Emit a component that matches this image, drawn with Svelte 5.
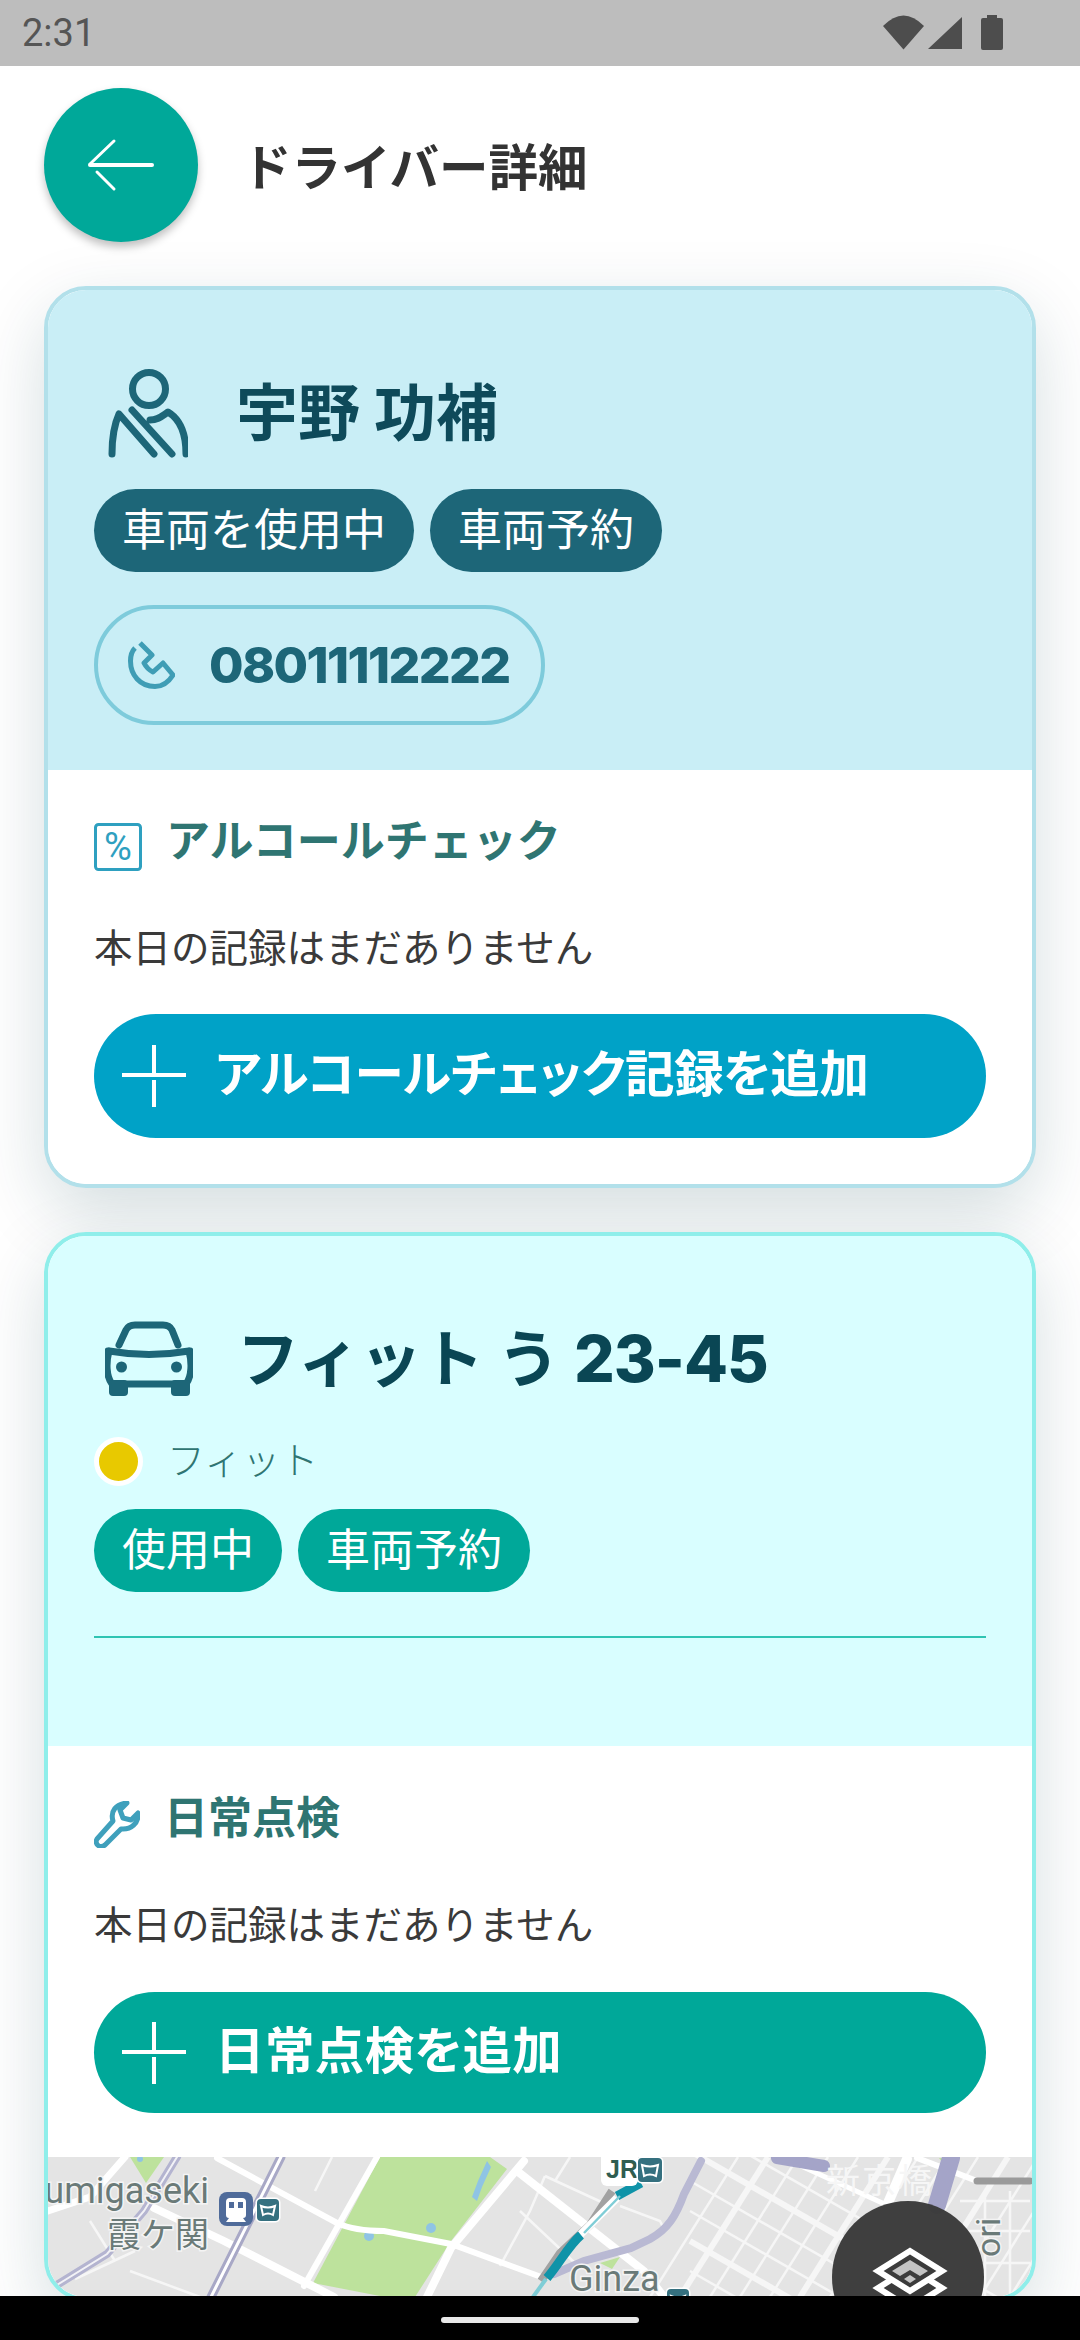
<script>
  // street grid for the right half of the map, page-space coords
  const risers = Array.from({ length: 15 }, (_, i) => ({
    x: 650 + i * 30,
    w: i % 4 === 1 ? 6 : 2.5,
  }))
  const crossers = Array.from({ length: 12 }, (_, i) => ({
    y: 2120 + i * 30,
    w: i % 3 === 1 ? 6 : 2.5,
  }))
</script>

<div class="app">
  <div class="status">
    <span class="time">2:31</span>
    <svg class="status-icons" width="120" height="35" viewBox="883 15 120 35" fill="#4d4d4d">
      <path d="M883 26Q903.5 5 924 26L903.5 49.5Z" />
      <path d="M962 17V49H928Z" />
      <path d="M987 15h10v3h4a2 2 0 0 1 2 2v28a2 2 0 0 1-2 2h-18a2 2 0 0 1-2-2V20a2 2 0 0 1 2-2h4Z" />
    </svg>
  </div>

  <div class="scroll">
    <div class="top">
      <button class="back" aria-label="戻る">
        <svg width="154" height="154" viewBox="44 88 154 154" fill="none" stroke="#fff" stroke-linecap="round">
          <path d="M90 165H152" stroke-width="4" />
          <path d="M114 141L90 164M97 172L114 189" stroke-width="3" />
        </svg>
      </button>
      <h1>ドライバー詳細</h1>
    </div>

    <section class="card driver">
      <div class="head">
        <div class="name-row">
          <svg width="84" height="90" viewBox="104 368 84 90" fill="none" stroke="#1d6678" stroke-width="7" stroke-linecap="round" stroke-linejoin="round">
            <circle cx="149" cy="389" r="16.5" />
            <path d="M112 454C112 440 114 425 119 414L154 454M132 410L172 454M150 420C158 420 162 416 168 412C178 418 186 430 186 454" />
          </svg>
          <h2>宇野 功補</h2>
        </div>
        <div class="chips">
          <span class="chip">車両を使用中</span>
          <span class="chip">車両予約</span>
        </div>
        <div class="phone">
          <svg width="47" height="48" viewBox="128 641 47 48" fill="none" stroke="#3f9db5" stroke-width="5" stroke-linejoin="round">
            <path d="M140 643L152 655L144 663C146 667 149 670 153 672L163 663L173 675C168 683 162 686.500 155 686.500C140 686.500 130.500 675 130.500 661C130.500 655 132 651 135 648" />
          </svg>
          <span>08011112222</span>
        </div>
      </div>

      <div class="body">
        <div class="sec-title">
          <svg width="48" height="48" viewBox="0 0 48 48">
            <rect x="1.500" y="1.500" width="45" height="45" rx="3" fill="none" stroke="#2ea0c0" stroke-width="3" />
            <text x="24" y="37" text-anchor="middle" class="pct">%</text>
          </svg>
          <h3>アルコールチェック</h3>
        </div>
        <p>本日の記録はまだありません</p>
        <button class="add">
          <svg width="66" height="64" viewBox="0 0 66 64" fill="none" stroke="#fff" stroke-width="4">
            <path d="M33 1V31M1 31H65M33 36V63" />
          </svg>
          <span>アルコールチェック記録を追加</span>
        </button>
      </div>
    </section>

    <section class="card vehicle">
      <div class="head">
        <div class="name-row">
          <svg width="88" height="80" viewBox="105 1319 88 80" fill="none" stroke="#1d6678" stroke-width="7" stroke-linecap="round" stroke-linejoin="round">
            <path d="M119 1345L126 1330C128 1326 131 1325 135 1325H163C167 1325 170 1326 172 1330L178 1345" />
            <path d="M109 1351Q149 1358 189 1351C192 1362 192 1376 186 1384H112C106 1376 106 1362 109 1351Z" />
            <g fill="#1d6678" stroke="none">
              <rect x="109" y="1380" width="19" height="16" rx="4" />
              <rect x="171" y="1380" width="19" height="16" rx="4" />
              <circle cx="121.500" cy="1367" r="5.500" />
              <circle cx="176.500" cy="1367" r="5.500" />
              <circle cx="108" cy="1351" r="3.500" />
              <circle cx="190" cy="1351" r="3.500" />
            </g>
          </svg>
          <h2 class="plate">フィット う <b>23-45</b></h2>
        </div>
        <div class="color-row">
          <i class="dot"></i>
          <span>フィット</span>
        </div>
        <div class="chips tight">
          <span class="chip green">使用中</span>
          <span class="chip green">車両予約</span>
        </div>
        <hr />
      </div>

      <div class="body">
        <div class="sec-title wrench">
          <svg width="46" height="47" viewBox="94 1800 46 47" fill="none" stroke="#3fa0bc" stroke-width="5" stroke-linejoin="round">
            <path d="M97 1838L113 1820C110 1810 116 1803 127 1802L120 1809L123 1817L131 1819L138 1812C139 1822 131 1829 121 1828L105 1844C100 1848 94 1843 97 1838Z" />
          </svg>
          <h3>日常点検</h3>
        </div>
        <p>本日の記録はまだありません</p>
        <button class="add teal">
          <svg width="66" height="64" viewBox="0 0 66 64" fill="none" stroke="#fff" stroke-width="4">
            <path d="M33 1V31M1 31H65M33 36V63" />
          </svg>
          <span>日常点検を追加</span>
        </button>
      </div>

      <div class="map">
        <svg width="984" height="140" viewBox="48 2156 984 140">
          <rect x="48" y="2156" width="984" height="140" fill="#e4e4e4" />
          <!-- parks -->
          <g fill="#bde29c">
            <path d="M130 2156H164L146 2182Z" />
            <path d="M380 2156H490L507 2168L451 2240L415 2296H385L313 2282Z" />
            <path d="M600 2262L620 2256L612 2268Z" />
            <path d="M939 2157L960 2157L950 2172Z" />
          </g>
          <!-- ponds -->
          <g fill="#8fc4e4">
            <path d="M487 2160L491 2166L482 2186L477 2200L472 2196L478 2180Z" />
            <circle cx="431" cy="2227" r="5" />
            <circle cx="369" cy="2235" r="5" />
            <circle cx="140" cy="2158" r="3" />
          </g>
          <!-- street grid -->
          <g stroke="#f6f6f6" fill="none">
            {#each risers as r}
              <path d="M{r.x} 2296L{r.x + 88} 2156" stroke-width={r.w} />
            {/each}
            {#each crossers as c}
              <path d="M690 {c.y}L1030 {c.y + 195}" stroke-width={c.w} />
            {/each}
            <g stroke-width="2.500">
              <path d="M520 2210L575 2262M545 2175L610 2205M500 2265L530 2210L545 2175M570 2156L555 2180M620 2205L660 2220L665 2230M960 2200H1030M960 2230H1030M985 2190V2296M1010 2190V2296M984 2262H1030" />
              <path d="M90 2220L115 2260M75 2278L135 2250M130 2270L200 2296M332 2156L315 2190M262 2200L240 2240" />
            </g>
          </g>
          <!-- main roads -->
          <g stroke="#fff" fill="none" stroke-linecap="round">
            <path d="M217 2157L337 2222C350 2228 370 2230 384 2230L451 2243L544 2277" stroke-width="6" />
            <path d="M377 2156L304 2285" stroke-width="6" />
            <path d="M524 2160L451 2247L427 2296" stroke-width="8" />
            <path d="M154 2207L224 2240L334 2296" stroke-width="8" />
            <path d="M517 2170L644 2270L664 2296" stroke-width="8" />
            <path d="M48 2210L90 2196L125 2156" stroke-width="7" />
            <path d="M907 2158L888 2202" stroke-width="10" />
            <path d="M917 2157L977 2180" stroke-width="6" />
            <path d="M790 2160L900 2210" stroke-width="5" />
          </g>
          <!-- expressways -->
          <g fill="none" stroke-linecap="round">
            <path d="M177 2156L144 2210L107 2253L52 2287" stroke="#b4b4d0" stroke-width="8" />
            <path d="M177 2156L144 2210L107 2253L52 2287" stroke="#f2f2f6" stroke-width="2" />
            <path d="M281 2156L211 2296" stroke="#a8a8c6" stroke-width="9" />
            <path d="M281 2156L211 2296" stroke="#fff" stroke-width="3" />
            <path d="M701 2160L684 2193C676 2215 668 2228 650 2238L631 2247L584 2260L554 2273" stroke="#b9b9d3" stroke-width="8" />
            <path d="M777 2157L824 2165" stroke="#a4a4c8" stroke-width="12" />
            <path d="M951 2157L937 2204" stroke="#a4a4c8" stroke-width="18" />
            <path d="M977 2180H1030" stroke="#9a9a9a" stroke-width="7" />
          </g>
          <!-- rail -->
          <g fill="none">
            <path d="M612 2190L590 2224L560 2252L541 2280" stroke="#a2a2a2" stroke-width="8" />
            <path d="M641 2182L617 2195" stroke="#0f93a8" stroke-width="9" />
            <path d="M617 2197L580 2234" stroke="#fff" stroke-width="8" />
            <path d="M620 2195L584 2232" stroke="#7fcdd6" stroke-width="2.500" />
            <path d="M581 2234C568 2245 560 2262 547 2277" stroke="#0f93a8" stroke-width="9" />
            <path d="M546 2278L533 2296" stroke="#7fcdd6" stroke-width="4" />
          </g>
          <!-- labels -->
          <g class="lbl">
            <text x="209" y="2202" text-anchor="end" font-size="36">umigaseki</text>
            <text x="209" y="2246" text-anchor="end" font-size="34">霞ケ関</text>
            <text x="569" y="2290" font-size="36">Ginza</text>
            <text class="halo" x="826" y="2192" font-size="34" letter-spacing="2">新京橋</text>
            <text transform="rotate(-90 1000 2256)" x="1000" y="2256" font-size="34">ori</text>
          </g>
          <!-- station badges -->
          <rect x="219" y="2191" width="34" height="34" rx="8" fill="#4f6b9a" />
          <path d="M230 2197h12a4 4 0 0 1 4 4v13a3 3 0 0 1-3 3l3 4h-20l3-4a3 3 0 0 1-3-3v-13a4 4 0 0 1 4-4Z" fill="#fff" />
          <path d="M229 2201h5v6h-5ZM238 2201h5v6h-5Z" fill="#4f6b9a" />
          <rect x="601" y="2150" width="37" height="35" rx="6" fill="#fff" />
          <text class="jr" x="606" y="2177" font-size="25">JR</text>
          {#each [[257, 2198, 22], [638, 2157, 24], [667, 2288, 22]] as [x, y, s]}
            <rect x={x - 1.500} y={y - 1.500} width={s + 3} height={s + 3} rx="5" fill="#fff" />
            <rect {x} {y} width={s} height={s} rx="4" fill="#35707f" />
            <path d="M{x + 4} {y + 7}Q{x + s / 2} {y + 10} {x + s - 4} {y + 7}L{x + s - 6} {y + s - 6}Q{x + s / 2} {y + s - 9} {x + 6} {y + s - 6}Z" fill="none" stroke="#fff" stroke-width="2" />
          {/each}
        </svg>
        <button class="layers" aria-label="地図レイヤー">
          <svg width="152" height="152" viewBox="0 0 152 152" fill="#3b3b3b" stroke="#fff" stroke-width="6" stroke-linejoin="miter">
            <path d="M78 84L110 104L78 124L46 104Z" />
            <path d="M78 67L110 87L78 107L46 87Z" />
            <path d="M78 50L110 70L78 90L46 70Z" />
            <path d="M78 59L96 70L88 75L78 69L68 75L60 70Z" fill="#c4c4c4" stroke="none" />
            <path d="M78 74L84 78L78 82L72 78Z" fill="#c4c4c4" stroke="none" />
          </svg>
        </button>
      </div>
    </section>
  </div>

  <div class="nav"><span></span></div>
</div>

<style>
  :global(body) {
    margin: 0;
    background: #fff;
  }

  .app {
    width: 1080px;
    height: 2340px;
    display: flex;
    flex-direction: column;
    overflow: hidden;
    font-family: "Noto Sans CJK JP", "Noto Sans", sans-serif;
    color: #333;
  }

  .status {
    height: 66px;
    flex-shrink: 0;
    background: #bdbdbd;
    display: flex;
    align-items: center;
    justify-content: space-between;
    padding: 0 77px 0 22px;
  }

  .time {
    font-family: Roboto, sans-serif;
    font-size: 38px;
    color: #555;
  }

  .status-icons {
    display: block;
    margin-top: -1px;
  }

  .scroll {
    flex: 1;
    min-height: 0;
    overflow: hidden;
    padding: 22px 44px 0;
  }

  .top {
    display: flex;
    align-items: center;
    gap: 44px;
    margin-bottom: 44px;
  }

  button {
    border: none;
    padding: 0;
    font-family: inherit;
  }

  .back {
    width: 154px;
    height: 154px;
    border-radius: 50%;
    background: #00a899;
    box-shadow: 0 5px 8px rgba(0, 0, 0, 0.25);
    flex-shrink: 0;
  }

  .back svg,
  .layers svg {
    display: block;
  }

  h1 {
    margin: 0;
    font-size: 49.500px;
    font-weight: 700;
    line-height: 1;
    color: #333;
  }

  .card {
    border-radius: 42px;
    border: 4px solid;
    overflow: hidden;
    background: #fff;
    box-shadow: 0 24px 70px rgba(0, 60, 70, 0.17);
    margin-bottom: 44px;
  }

  .driver {
    border-color: #b2e0ea;
  }

  .vehicle {
    border-color: #8feeea;
  }

  .head {
    padding: 78px 46px 45px;
  }

  .driver .head {
    background: #c9eef6;
  }

  .vehicle .head {
    background: #d9feff;
    padding: 83px 46px 108px;
  }

  .name-row {
    display: flex;
    align-items: center;
    gap: 48px;
    padding-left: 10px;
  }

  .vehicle .name-row {
    padding-left: 11px;
    gap: 44px;
  }

  h2 {
    margin: 0 0 8px;
    font-size: 62px;
    font-weight: 700;
    line-height: 1;
    color: #0e4a5a;
  }

  .plate {
    margin-bottom: 4px;
    color: #0a4654;
    white-space: pre;
  }

  .plate b {
    font-family: Inter, sans-serif;
    font-weight: 800;
    font-size: 64px;
    letter-spacing: -1px;
  }

  .chips {
    display: flex;
    gap: 16px;
    margin-top: 31px;
  }

  .chips.tight {
    margin-top: 23px;
  }

  .chip {
    height: 83px;
    padding: 0 28px;
    border-radius: 42px;
    background: #1d6678;
    color: #fff;
    font-size: 44px;
    line-height: 77px;
    box-sizing: border-box;
  }

  .chip.green {
    background: #00a899;
  }

  .phone {
    display: inline-flex;
    align-items: center;
    gap: 34px;
    height: 120px;
    box-sizing: border-box;
    margin-top: 33px;
    padding: 0 31px 0 30px;
    border: 4px solid #7ecbdb;
    border-radius: 60px;
    font-family: Inter, sans-serif;
    font-size: 50px;
    font-weight: 800;
    letter-spacing: -1.600px;
    color: #1d6678;
  }

  .color-row {
    display: flex;
    align-items: center;
    gap: 24px;
    height: 49px;
    margin-top: 38px;
    font-size: 38px;
    font-weight: 300;
    color: #2f7572;
  }

  .color-row span {
    margin-top: -8px;
  }

  .dot {
    width: 49px;
    height: 49px;
    box-sizing: border-box;
    border-radius: 50%;
    background: #e8c900;
    border: 5px solid #fff;
  }

  hr {
    margin: 44px 0 0;
    border: none;
    height: 2px;
    background: #2fc4b2;
  }

  .body {
    padding: 53px 46px 46px;
    background: #fff;
  }

  .vehicle .body {
    padding: 55px 46px 44px;
  }

  .sec-title {
    display: flex;
    align-items: flex-start;
    gap: 24px;
    height: 48px;
  }

  .sec-title svg {
    flex-shrink: 0;
  }

  .sec-title.wrench {
    gap: 24px;
    height: 47px;
  }

  h3 {
    margin: -9px 0 0;
    font-size: 44px;
    font-weight: 700;
    line-height: 48px;
    color: #2f7572;
  }

  .wrench h3 {
    margin-top: -10px;
  }

  p {
    margin: 49px 0 0;
    font-size: 38.500px;
    line-height: 50px;
    color: #3a3a3a;
  }

  .add {
    display: flex;
    align-items: center;
    gap: 28px;
    width: 100%;
    height: 124px;
    margin-top: 44px;
    padding-left: 27px;
    border-radius: 62px;
    background: #00a2c7;
    color: #fff;
    font-size: 49.500px;
    font-weight: 700;
    font-feature-settings: "palt";
    letter-spacing: -0.400px;
    text-align: left;
  }

  .add.teal {
    height: 121px;
    margin-top: 45px;
    background: #00a899;
    letter-spacing: 0.400px;
  }

  .add span {
    line-height: 1;
    margin-top: -10px;
  }

  .map {
    position: relative;
    height: 140px;
    overflow: hidden;
  }

  .map > svg {
    display: block;
  }

  .lbl text {
    font-family: Roboto, "Noto Sans CJK JP", sans-serif;
    fill: #6a7a78;
    paint-order: stroke;
    stroke: #f4f4f4;
    stroke-width: 3px;
  }

  .lbl .halo {
    fill: #f6f6f6;
    stroke: none;
  }

  .pct {
    font-family: Roboto, sans-serif;
    font-size: 38px;
    fill: #2ea0c0;
  }

  .jr {
    font-family: "Liberation Sans", sans-serif;
    font-weight: 700;
    fill: #2f5d50;
  }

  .layers {
    position: absolute;
    left: 784px;
    top: 44px;
    width: 152px;
    height: 152px;
    border-radius: 50%;
    background: rgba(59, 59, 59, 0.98);
  }

  .nav {
    height: 44px;
    flex-shrink: 0;
    background: #000;
    display: flex;
    justify-content: center;
    padding-top: 21px;
    box-sizing: border-box;
    position: relative;
  }

  .nav span {
    width: 198px;
    height: 6px;
    border-radius: 3px;
    background: #e8e8e8;
  }
</style>
